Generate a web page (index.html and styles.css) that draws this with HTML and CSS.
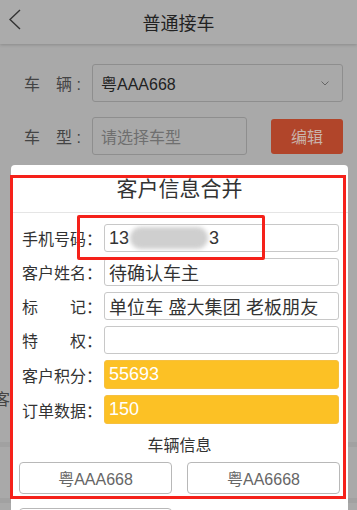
FILE: index.html
```html
<!DOCTYPE html>
<html>
<head>
<meta charset="utf-8">
<link rel="stylesheet" href="styles.css">
</head>
<body>
<div class="app">
  <header class="topbar">
    <svg class="back" width="12" height="22" viewBox="0 0 12 22"><polyline points="11,1 1,10.5 11,20" fill="none" stroke="#333" stroke-width="1.4"/></svg>
    <div class="topbar-title">普通接车</div>
  </header>

  <div class="form">
    <div class="form-row">
      <div class="form-label">车&emsp;辆 :</div>
      <div class="select">
        <span>粤AAA668</span>
        <svg class="caret" width="8" height="5" viewBox="0 0 8 5"><polyline points="0.5,0.5 4,4 7.5,0.5" fill="none" stroke="#666" stroke-width="1"/></svg>
      </div>
    </div>
    <div class="form-row row2">
      <div class="form-label">车&emsp;型 :</div>
      <div class="text-input placeholder">请选择车型</div>
      <div class="edit-btn">编辑</div>
    </div>
  </div>

  <div class="sect1"><span class="bg-label">客户</span></div>
  <div class="band"></div>
  <div class="sect2"></div>
  <div class="band"></div>

  <div class="modal">
    <div class="modal-title">客户信息合并</div>
    <div class="fields">
      <div class="field">
        <div class="f-label">手机号码：</div>
        <div class="f-box">13<span class="blur"></span>3</div>
      </div>
      <div class="field">
        <div class="f-label">客户姓名：</div>
        <div class="f-box">待确认车主</div>
      </div>
      <div class="field">
        <div class="f-label">标&emsp;&emsp;记：</div>
        <div class="f-box tight">单位车 盛大集团 老板朋友</div>
      </div>
      <div class="field">
        <div class="f-label">特&emsp;&emsp;权：</div>
        <div class="f-box"></div>
      </div>
      <div class="field">
        <div class="f-label">客户积分：</div>
        <div class="f-box yellow">55693</div>
      </div>
      <div class="field">
        <div class="f-label">订单数据：</div>
        <div class="f-box yellow">150</div>
      </div>
    </div>
    <div class="sub-title">车辆信息</div>
    <div class="cars">
      <div class="car">粤AAA668</div>
      <div class="car">粤AA6668</div>
    </div>
    <div class="cars more">
      <div class="car"></div>
    </div>
  </div>

  <div class="mark mark-big"></div>
  <div class="mark mark-phone"></div>
</div>
</body>
</html>
```

FILE: styles.css
```css
* { box-sizing: border-box; }
html, body { margin: 0; padding: 0; }
body {
  font-family: "Liberation Sans", "Noto Sans CJK SC", sans-serif;
  background: #a9a9a9;
}
.app {
  position: relative;
  width: 357px;
  height: 510px;
  overflow: hidden;
  background: #a9a9a9;
}
.topbar {
  position: relative;
  height: 44px;
  background: #ababab;
  box-shadow: 0 1px 3px rgba(0,0,0,0.18);
  display: flex;
  align-items: center;
  justify-content: center;
}
.back {
  position: absolute;
  left: 9px;
  top: 9px;
}
.topbar-title {
  font-size: 18px;
  color: #222;
}
.form {
  padding: 20px 14px 0 24px;
}
.form-row {
  display: flex;
  align-items: center;
  height: 38px;
}
.row2 { margin-top: 15px; }
.form-label {
  width: 68px;
  font-size: 16px;
  color: #444;
}
.select {
  flex: 1;
  height: 38px;
  border: 1px solid #8e8e8e;
  border-radius: 3px;
  display: flex;
  align-items: center;
  justify-content: space-between;
  padding: 0 13px 0 8px;
  font-size: 16px;
  color: #222;
}
.text-input {
  width: 155px;
  height: 38px;
  border: 1px solid #8e8e8e;
  border-radius: 3px;
  display: flex;
  align-items: center;
  padding-left: 8px;
  font-size: 16px;
}
.placeholder { color: #6f6f6f; }
.edit-btn {
  margin-left: auto;
  width: 72px;
  height: 35px;
  background: #b1452a;
  border-radius: 3px;
  color: #c9b3ab;
  font-size: 16px;
  display: flex;
  align-items: center;
  justify-content: center;
}
.sect1 {
  height: 287px;
  display: flex;
  align-items: flex-end;
  padding-bottom: 32px;
}
.bg-label {
  margin-left: -6px;
  font-size: 16px;
  color: #444;
}
.band {
  height: 5px;
  background: #a1a1a1;
}
.sect2 { height: 51px; }

.modal {
  position: absolute;
  left: 11px;
  top: 165px;
  width: 337px;
  height: 360px;
  background: #fff;
  border-radius: 4px;
}
.modal-title {
  height: 48px;
  line-height: 48px;
  text-align: center;
  font-size: 21px;
  color: #333;
  border-bottom: 1px solid #e5e5e5;
}
.fields {
  padding: 11px 9px 0 11px;
  display: flex;
  flex-direction: column;
  gap: 6px;
}
.field {
  display: flex;
  align-items: center;
}
.f-label {
  width: 82px;
  font-size: 16px;
  color: #333;
}
.f-box {
  flex: 1;
  height: 28px;
  border: 1px solid #c8c8c8;
  border-radius: 3px;
  padding-left: 4px;
  font-size: 18px;
  color: #333;
  display: flex;
  align-items: center;
  white-space: nowrap;
  overflow: hidden;
}
.tight { letter-spacing: 0.1px; }
.yellow {
  height: 29px;
  background: #fcc125;
  border-color: #f6c040;
  color: #fff;
}
.blur {
  display: inline-block;
  width: 78px;
  height: 22px;
  margin: 0 1px 0 1px;
  background: #cfcfcf;
  border-radius: 11px;
  filter: blur(2px);
}
.sub-title {
  margin-top: 10px;
  height: 24px;
  line-height: 24px;
  text-align: center;
  font-size: 16px;
  color: #333;
}
.cars {
  margin-top: 4px;
  padding: 0 8px;
  display: flex;
  gap: 15px;
}
.car {
  width: 153px;
  height: 32px;
  border: 1px solid #b8b8b8;
  border-radius: 4px;
  display: flex;
  align-items: center;
  justify-content: center;
  font-size: 16px;
  color: #666;
}
.more { margin-top: 14px; }

.mark {
  position: absolute;
  border: 3px solid #f5211a;
  pointer-events: none;
}
.mark-big {
  left: 10px;
  top: 175px;
  width: 336px;
  height: 324px;
}
.mark-phone {
  left: 77px;
  top: 215px;
  width: 188px;
  height: 45px;
  border-radius: 2px;
}
```
